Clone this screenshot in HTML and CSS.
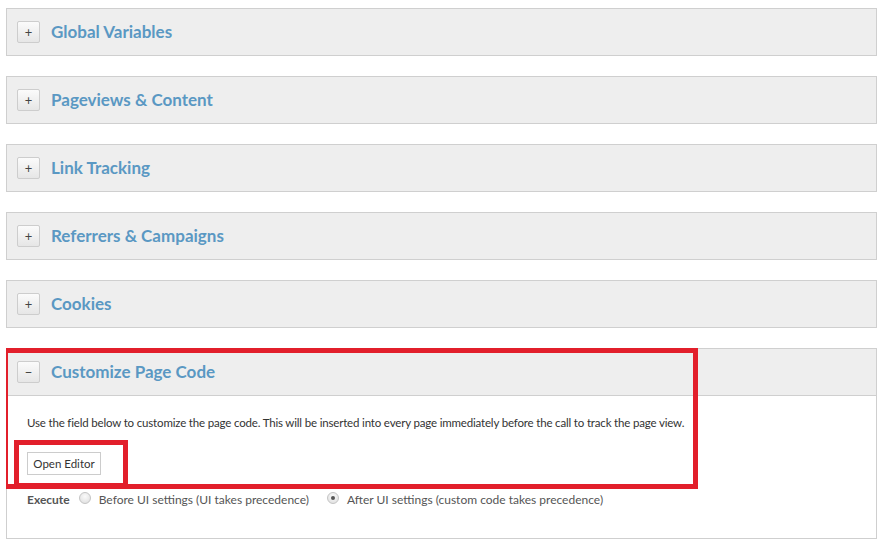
FILE: index.html
```html
<!DOCTYPE html>
<html lang="en">
<head>
    <meta charset="UTF-8">
    <title>Page Code Settings</title>
    <link rel="stylesheet" href="styles.css">
</head>
<body>
    <div class="panel">
        <div class="panel-head"><span class="toggle">+</span><span class="panel-title">Global Variables</span></div>
    </div>
    <div class="panel">
        <div class="panel-head"><span class="toggle">+</span><span class="panel-title">Pageviews &amp; Content</span></div>
    </div>
    <div class="panel">
        <div class="panel-head"><span class="toggle">+</span><span class="panel-title">Link Tracking</span></div>
    </div>
    <div class="panel">
        <div class="panel-head"><span class="toggle">+</span><span class="panel-title">Referrers &amp; Campaigns</span></div>
    </div>
    <div class="panel">
        <div class="panel-head"><span class="toggle">+</span><span class="panel-title">Cookies</span></div>
    </div>
    <div class="panel open">
        <div class="panel-head"><span class="toggle">&minus;</span><span class="panel-title">Customize Page Code</span></div>
        <div class="panel-body">
            <p class="hint">Use the field below to customize the page code. This will be inserted into every page immediately before the call to track the page view.</p>
            <button class="editor-btn">Open Editor</button>
            <div class="execute-row">
                <span class="execute-label">Execute</span>
                <label class="radio"><span class="dot"></span>Before UI settings (UI takes precedence)</label>
                <label class="radio"><span class="dot checked"></span>After UI settings (custom code takes precedence)</label>
            </div>
        </div>
        <div class="mark mark-outer"></div>
        <div class="mark mark-inner"></div>
    </div>
</body>
</html>
```

FILE: styles.css
```css
body {
    margin: 8px 0 0 6px;
    font-family: Lato, 'Open Sans', sans-serif;
    color: #333;
    background: #fff;
}
.panel {
    width: 871px;
    margin-bottom: 20px;
    box-sizing: border-box;
}
.panel.open {
    position: relative;
}
.panel-head {
    height: 48px;
    box-sizing: border-box;
    border: 1px solid #cfcfcf;
    background: #eeeeee;
    display: flex;
    align-items: center;
    padding-left: 10px;
}
.toggle {
    width: 23px;
    height: 22px;
    box-sizing: border-box;
    border: 1px solid #cdcdcd;
    border-radius: 2px;
    background: linear-gradient(#fbfbfb, #e6e6e6);
    display: flex;
    align-items: center;
    justify-content: center;
    font-size: 13px;
    color: #444;
    margin-right: 11px;
}
.panel-title {
    font-size: 17px;
    font-weight: 700;
    color: #5a98c3;
    position: relative;
    top: -1px;
}
.panel-body {
    height: 143px;
    box-sizing: border-box;
    border: 1px solid #cfcfcf;
    border-top: none;
    padding: 20px 0 0 20px;
}
.hint {
    margin: 0;
    font-size: 11.5px;
    line-height: 14px;
    letter-spacing: -0.17px;
    color: #333;
}
.editor-btn {
    display: block;
    margin-top: 22px;
    width: 74px;
    height: 23px;
    padding: 0;
    border: 1px solid #cccccc;
    background: #fff;
    font-family: inherit;
    font-size: 11.5px;
    color: #333;
}
.execute-row {
    display: flex;
    align-items: center;
    margin-top: 17px;
    font-size: 12px;
    color: #555;
}
.execute-label {
    font-weight: 700;
    color: #555;
    margin-right: 9px;
}
.radio {
    display: flex;
    align-items: center;
    margin-right: 18px;
}
.dot {
    width: 12px;
    height: 12px;
    box-sizing: border-box;
    border-radius: 50%;
    border: 1px solid #c4c4c4;
    background: radial-gradient(circle at 50% 35%, #fafafa, #dcdcdc);
    margin-right: 8px;
    position: relative;
    top: -2px;
}
.dot.checked::after {
    content: "";
    position: absolute;
    left: 3px;
    top: 3px;
    width: 4px;
    height: 4px;
    border-radius: 50%;
    background: #555;
}
.mark {
    position: absolute;
    border: 5px solid #e21f2b;
    box-sizing: border-box;
}
.mark-outer {
    left: -3px;
    top: 0;
    width: 695px;
    height: 141px;
}
.mark-inner {
    left: 8px;
    top: 92px;
    width: 114px;
    height: 48px;
}
```
